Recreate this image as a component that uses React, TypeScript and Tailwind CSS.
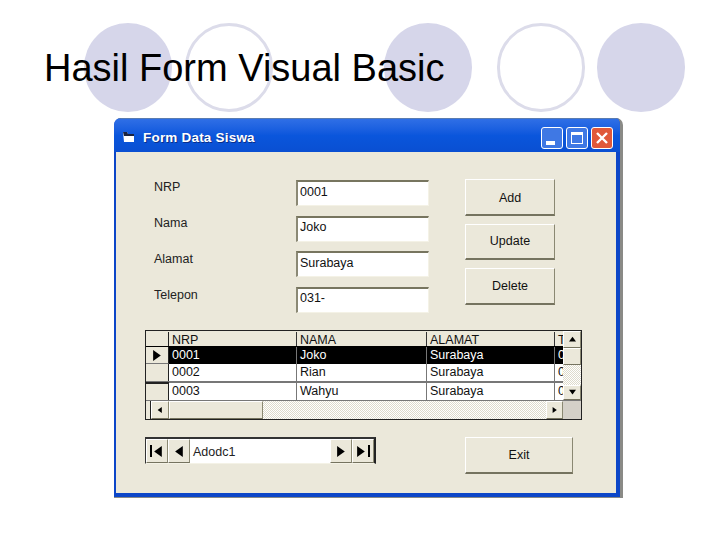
const sans = "font-['Liberation_Sans',Arial,sans-serif]";

const Circle = ({ filled, className = "" }: { filled?: boolean; className?: string }) => (
  <div
    className={`w-[88px] h-[89px] shrink-0 rounded-full ${
      filled ? "bg-[#d6d6ea]" : "border-[3px] border-[#dcdcea]"
    } ${className}`}
  />
);

const Tri = ({ dir, size = 8 }: { dir: "l" | "r" | "u" | "d"; size?: number }) => {
  const pts = { l: "8,0 8,10 1,5", r: "1,0 1,10 8,5", u: "0,8 10,8 5,1", d: "0,1 10,1 5,8" }[dir];
  return (
    <svg width={size} height={size} viewBox="0 0 10 10" className="block">
      <polygon points={pts} fill="#000" />
    </svg>
  );
};

const Raised = ({ children, className = "" }: { children?: React.ReactNode; className?: string }) => (
  <div
    className={`flex items-center justify-center bg-[#ebe8da] border border-t-white border-l-white border-r-[#8a8872] border-b-[#75735f] ${className}`}
  >
    {children}
  </div>
);

const Field = ({ label, value, labelTop, valueTop }: { label: string; value: string; labelTop: string; valueTop: string }) => (
  <div className="flex h-[26px] mb-[9.5px]">
    <div className={`w-[142px] shrink-0 text-[12.5px] leading-[14px] text-[#222] ${labelTop}`}>{label}</div>
    <div className={`w-[133px] h-[26px] bg-white border-t-2 border-l-2 border-t-[#77755f] border-l-[#8b8975] border-b border-r border-b-[#f4f2e6] border-r-[#f4f2e6] pl-[2px] text-[12.5px] leading-[18px] text-[#111] ${valueTop}`}>
      {value}
    </div>
  </div>
);

const rows = [
  ["0001", "Joko", "Surabaya", "0"],
  ["0002", "Rian", "Surabaya", "0"],
  ["0003", "Wahyu", "Surabaya", "0"],
];

const Cell = ({ w, children, line = "border-[#777]" }: { w: string; children: string; line?: string }) => (
  <div className={`${w} shrink-0 overflow-hidden pl-[3px] border-r ${line}`}>{children}</div>
);

const Grid = () => (
  <div className="ml-[29px] mt-[8px] w-[437px] h-[90px] border border-[#222] flex flex-col text-[12.5px] leading-[16px] text-[#111] bg-[#ebe8da]">
    <div className="flex h-[69px]">
      <div className="w-[417px] overflow-hidden flex flex-col">
        <div className="flex h-[15px] pt-[1px]">
          <div className="w-[23px] shrink-0 bg-[#ebe8da] border-r border-[#222]" />
          <Cell w="w-[128px]" line="border-[#333]">NRP</Cell>
          <Cell w="w-[130px]" line="border-[#333]">NAMA</Cell>
          <Cell w="w-[128px]" line="border-[#333]">ALAMAT</Cell>
          <div className="pl-[3px]">T</div>
        </div>
        {rows.map((r, i) => (
          <div
            key={r[0]}
            className={`flex h-[18px] ${
              i === 0 ? "bg-black text-white pt-[1px]" : i === 1 ? "bg-white border-b border-[#777]" : "bg-white border-t border-[#777]"
            }`}
          >
            <div
              className={`w-[23px] shrink-0 bg-[#ebe8da] border-r border-[#222] flex items-center justify-center ${
                i === 0 ? "border-b border-b-[#777]" : i === 2 ? "border-t-2 border-t-[#222] -mt-[1px]" : ""
              }`}
            >
              {i === 0 && <Tri dir="r" size={11} />}
            </div>
            <Cell w="w-[128px]">{r[0]}</Cell>
            <Cell w="w-[130px]">{r[1]}</Cell>
            <Cell w="w-[128px]">{r[2]}</Cell>
            <div className="pl-[3px]">{r[3]}</div>
          </div>
        ))}
      </div>
      <div className="w-[18px] flex flex-col bg-[repeating-conic-gradient(#fff_0_25%,#dedbcc_0_50%)] bg-[length:2px_2px]">
        <Raised className="h-[17px]"><Tri dir="u" size={7} /></Raised>
        <Raised className="h-[17px]" />
        <div className="flex-1" />
        <Raised className="h-[15px]"><Tri dir="d" size={7} /></Raised>
      </div>
    </div>
    <div className="flex h-[19px] border-t border-[#777]">
      <div className="w-[5px] bg-[#ebe8da] border-r border-[#222]" />
      <Raised className="w-[18px]"><Tri dir="l" size={6} /></Raised>
      <Raised className="w-[94px]" />
      <div className="w-[283px] bg-[repeating-conic-gradient(#fff_0_25%,#dedbcc_0_50%)] bg-[length:2px_2px]" />
      <Raised className="w-[17px]"><Tri dir="r" size={6} /></Raised>
      <div className="flex-1 bg-[#d4d0c8]" />
    </div>
  </div>
);

const NavBtn = ({ dir, edge }: { dir: "l" | "r"; edge?: boolean }) => (
  <Raised className="w-[22px] h-full">
    <div className="flex items-center">
      {edge && dir === "l" && <div className="w-[2px] h-[12px] bg-black mr-[1px]" />}
      <Tri dir={dir} size={11} />
      {edge && dir === "r" && <div className="w-[2px] h-[12px] bg-black ml-[1px]" />}
    </div>
  </Raised>
);

const App = () => (
  <div className={`relative w-[720px] h-[540px] overflow-hidden bg-white ${sans}`}>
    <div className="flex pt-[23px] pl-[84px]">
      <Circle filled />
      <Circle className="ml-[13px]" />
      <Circle filled className="ml-[111px]" />
      <Circle className="ml-[25px]" />
      <Circle filled className="ml-[12px]" />
    </div>
    <h1 className="absolute left-[44px] top-[46px] text-[38px] leading-[44px] text-black">Hasil Form Visual Basic</h1>

    <div className="ml-[114px] mt-[6px] w-[509px] h-[380px] flex flex-col rounded-t-[7px] bg-[#0c46c8] border-r-[3px] border-b border-r-[#8a8a86] border-b-[#8a8a86] overflow-hidden">
      <div className="flex items-center h-[34px] shrink-0 border-t border-t-[#5a7cb0] pt-[5px] pl-[8px] pr-[4px] bg-gradient-to-b from-[#2f6fe6] via-[#0a56dc] to-[#0a4fd2]">
        <svg width="13" height="12" viewBox="0 0 13 12" className="shrink-0 -mt-[2px]">
          <path d="M1 1h4l1 2h6v8H2z" fill="#fff" />
          <path d="M1 1h4l1 2h6v2H2z" fill="#1a2340" />
        </svg>
        <span className="ml-[8px] text-[13.5px] tracking-[0.2px] font-bold text-white [text-shadow:1px_1px_0_#0a2f8a]">Form Data Siswa</span>
        <div className="ml-auto flex gap-[3px] mr-[3px]">
          <div className="w-[22px] h-[22px] rounded-[3px] border border-white bg-[#3f78e4] flex items-end pl-[4px] pb-[3px]">
            <div className="w-[9px] h-[4px] bg-white" />
          </div>
          <div className="w-[22px] h-[22px] rounded-[3px] border border-white bg-[#3f78e4] flex items-center justify-center">
            <div className="w-[12px] h-[12px] border border-white border-t-[3px]" />
          </div>
          <div className="w-[22px] h-[22px] rounded-[3px] border border-white bg-[#e0583a] flex items-center justify-center">
            <svg width="14" height="14" viewBox="0 0 14 14">
              <path d="M2 2l10 10M12 2L2 12" stroke="#fff" strokeWidth="2.4" />
            </svg>
          </div>
        </div>
      </div>

      <div className="flex-1 ml-[2px] mr-[4px] mb-[4px] bg-[#ebe8da] flex flex-col">
        <div className="flex pt-[28px]">
          <div className="pl-[38px] w-[349px] shrink-0">
            <Field label="NRP" value="0001" labelTop="" valueTop="pt-[1px]" />
            <Field label="Nama" value="Joko" labelTop="" valueTop="" />
            <Field label="Alamat" value="Surabaya" labelTop="pt-[1px]" valueTop="pt-[1px]" />
            <Field label="Telepon" value="031-" labelTop="pt-[1px]" valueTop="" />
          </div>
          <div className="flex flex-col gap-[8px] -mt-[1px] text-[12.5px] text-[#111]">
            <Raised className="w-[90px] h-[37px] pt-[2px] border-b-2">Add</Raised>
            <Raised className="w-[90px] h-[36px] border-b-2">Update</Raised>
            <Raised className="w-[90px] h-[37px] border-b-2">Delete</Raised>
          </div>
        </div>
        <Grid />
        <div className="flex mt-[17px]">
          <div className="ml-[29px] w-[231px] h-[27px] border-t-2 border-l border-t-[#333] border-l-[#333] border-r-2 border-r-[#222] border-b border-b-[#f4f2e6] flex items-stretch text-[12.5px]">
            <NavBtn dir="l" edge />
            <NavBtn dir="l" />
            <div className="flex-1 bg-white pl-[3px] leading-[26px] text-[#222]">Adodc1</div>
            <NavBtn dir="r" />
            <NavBtn dir="r" edge />
          </div>
          <Raised className="ml-[89px] w-[108px] h-[37px] border-b-2 text-[12.5px] text-[#111]">Exit</Raised>
        </div>
      </div>
    </div>
  </div>
);

export default App;
